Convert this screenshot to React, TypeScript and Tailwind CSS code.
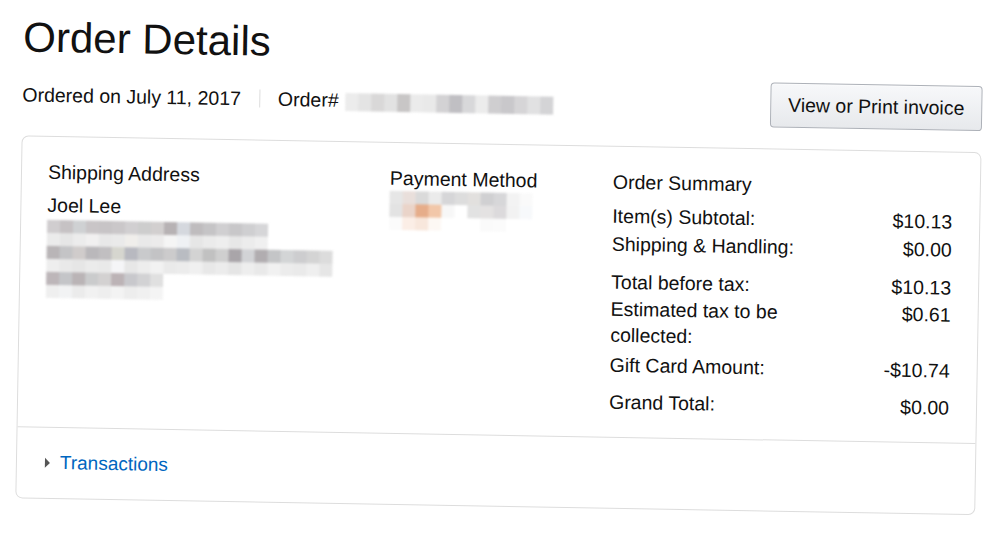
import React from "react";

const FONT = "font-['Liberation_Sans',Arial,sans-serif]";

// pixelated placeholders standing in for the blurred personal data
const orderNo = [
  ["#ececec", "#e4e4e4", "#d9d8d8", "#e2e2e2", "#c8c6c6", "#ebebeb", "#e9e9e9", "#d3d2d4", "#c0bfc3", "#d8d8da", "#ececec", "#cfced0", "#c9c8cb", "#d6d5d7", "#e1e1e2", "#d4d4d6"],
];

const address = [
  ["#d0cdcf", "#c6c2c4", "#cfd1d3", "#c9c5c7", "#c7c4c6", "#cac7c9", "#d1cfd1", "#cdcdcd", "#d2cfcf", "#b7b2b4", "#d5d8de", "#bfbcbe", "#c5c4c6", "#d0cfd1", "#c8c7c9", "#cfcfd1", "#d6d6d8"],
  ["#ebebeb", "#e6e6e6", "#ececec", "#f1f0f0", "#e8e8e8", "#eaeaea", "#f0eeeb", "#e9e9e9", "#ecebeb", "#f5f5f5", "#eff1f4", "#e6e6e6", "#ebebeb", "#eeeeee", "#e7e7e7", "#ececec", "#f0f0f0"],
  ["#b9b5b7", "#c4c4c6", "#d0cccb", "#bab8bb", "#c1bfc1", "#d6d6cf", "#b8b9c0", "#c9cacc", "#c3c3c5", "#cccbcc", "#b9bcc2", "#d3d3d3", "#c1c1c1", "#cfcfcf", "#a9a5a9", "#d2d3d6", "#b1adb0", "#c4c5c7", "#d3d5d6", "#cdcdcf", "#d4d4d4", "#dcdcdc"],
  ["#eeeeee", "#e9e9e9", "#e6e6e6", "#ebebeb", "#e9e9e9", "#f5f5f7", "#e7e7e7", "#ededed", "#f2f2f2", "#eaeaea", "#ececec", "#f0f0f0", "#e8e8e8", "#ececec", "#e5e5e5", "#eeeeee", "#e9e9e9", "#f1f1f1", "#ececec", "#eaeaea", "#efefef", "#e6e6e6"],
  ["#bdb6b9", "#c4c5c8", "#bab4b6", "#cacbcc", "#d3d1d1", "#bcb3b6", "#c8c8cc", "#d2d2d4", "#e0e0e0"],
  ["#efefef", "#f2f3f4", "#ebebeb", "#f1f1f1", "#eeeeee", "#f3f3f3", "#ededed", "#f0f0f0", "#f4f4f4"],
];

const payment = [
  ["#e6e6e6", "#e9dfdb", "#dadada", "#ebebeb", "#d6d6d8", "#dddddd", "#e2e0de", "#d0d0d2", "#d7d7d9", "#f3f3f3", "#fafafa"],
  ["#e3e3e3", "#ead4c9", "#e6ad8a", "#f2c7a9", "#f7f7f7", "#ffffff", "#e2e2e2", "#e4e2e2", "#dcdadc", "#f2f2f2", "#f7f9fb"],
  ["#fbfbfb", "#fbeee6", "#f8e7dc", "#fdf8f4", "#ffffff", "#ffffff", "#ffffff", "#fafafa", "#fbfbfb", "#ffffff", "#ffffff"],
];

function Mosaic({ rows, cell, h }: { rows: string[][]; cell: number; h: number }) {
  return (
    <div className="flex flex-col blur-[1.2px]">
      {rows.map((row, i) => (
        <div key={i} className="flex">
          {row.map((c, j) => (
            <div key={j} style={{ width: cell, height: h, backgroundColor: c }} />
          ))}
        </div>
      ))}
    </div>
  );
}

const summary: { label: string; value: string; cls: string }[] = [
  { label: "Item(s) Subtotal:", value: "$10.13", cls: "mt-[6px]" },
  { label: "Shipping & Handling:", value: "$0.00", cls: "" },
  { label: "Total before tax:", value: "$10.13", cls: "mt-[10px]" },
  { label: "Estimated tax to be collected:", value: "$0.61", cls: "leading-[26px]" },
  { label: "Gift Card Amount:", value: "-$10.74", cls: "mt-[3px]" },
  { label: "Grand Total:", value: "$0.00", cls: "mt-[9px]" },
];

export default function App() {
  return (
    <div className={`h-[536px] w-[1000px] overflow-hidden bg-white text-[#111] ${FONT}`}>
      <div className="w-[984px] origin-top-left rotate-[1deg] pl-6 pt-[13px]">
        <h1 className="text-[42px] leading-[48px] font-normal">Order Details</h1>

        <div className="mt-2 flex items-start justify-between">
          <div className="flex items-center pt-[11px] text-[19.5px] leading-[28px]">
            <span>Ordered on July 11, 2017</span>
            <span className="mx-[18px] h-[18px] w-px bg-[#ddd]" />
            <span>Order#</span>
            <span className="ml-[7px] mt-[4px]">
              <Mosaic rows={orderNo} cell={13} h={18} />
            </span>
          </div>
          <button className="h-[45px] w-[212px] rounded-[4px] border border-[#adb1b8] bg-gradient-to-b from-[#f7f8fa] to-[#e7e9ec] text-[19.5px] text-[#111] shadow-[0_1px_0_rgba(255,255,255,0.6)_inset]">
            View or Print invoice
          </button>
        </div>

        <div className="mt-[21px] rounded-[7px] border border-[#ddd]">
          <div className="flex px-[26px] pt-[21px] pb-[21px] text-[19.5px] leading-[28px]">
            <div className="w-[342px]">
              <div>Shipping Address</div>
              <div className="mt-[5px]">Joel Lee</div>
              <div className="mt-px">
                <Mosaic rows={address} cell={13} h={13} />
              </div>
            </div>
            <div className="w-[223px]">
              <div>Payment Method</div>
              <div className="mt-[-1px]">
                <Mosaic rows={payment} cell={13} h={13} />
              </div>
            </div>
            <div className="w-[340px]">
              <div>Order Summary</div>
              {summary.map((r) => (
                <div key={r.label} className={`flex justify-between ${r.cls}`}>
                  <span className="w-[200px]">{r.label}</span>
                  <span className="text-right">{r.value}</span>
                </div>
              ))}
            </div>
          </div>
          <div className="flex h-[71px] items-center border-t border-[#ddd] pl-[28px]">
            <span className="mr-[10px] h-0 w-0 border-y-[5px] border-l-[5px] border-y-transparent border-l-[#555]" />
            <span className="text-[19px] text-[#0066c0]">Transactions</span>
          </div>
        </div>
      </div>
    </div>
  );
}
